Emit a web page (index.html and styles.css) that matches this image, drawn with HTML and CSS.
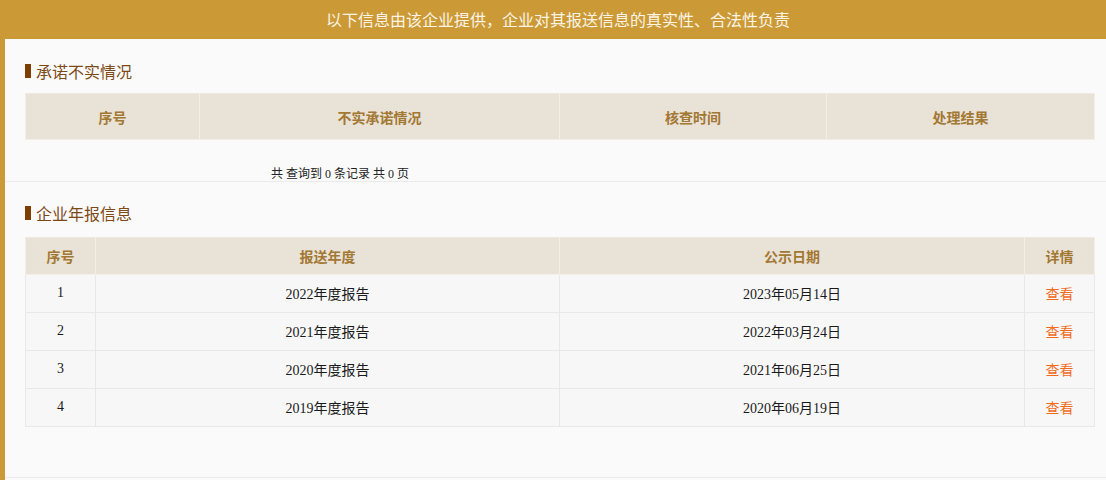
FILE: index.html
```html
<!DOCTYPE html>
<html lang="zh-CN">
<head>
<meta charset="utf-8">
<title>企业信息</title>
<link rel="stylesheet" href="styles.css">
</head>
<body>
<div class="notice">以下信息由该企业提供，企业对其报送信息的真实性、合法性负责</div>
<div class="frame">
  <section class="block block-first">
    <h2 class="sec-title"><span class="mark"></span>承诺不实情况</h2>
    <table class="grid grid-promise">
      <colgroup><col class="c1"><col class="c2"><col class="c3"><col class="c4"></colgroup>
      <thead>
        <tr><th>序号</th><th>不实承诺情况</th><th>核查时间</th><th>处理结果</th></tr>
      </thead>
    </table>
    <div class="pager">共 查询到 0 条记录 共 0 页</div>
  </section>
  <section class="block block-second">
    <h2 class="sec-title"><span class="mark"></span>企业年报信息</h2>
    <table class="grid grid-report">
      <colgroup><col class="r1"><col class="r2"><col class="r3"><col class="r4"></colgroup>
      <thead>
        <tr><th>序号</th><th>报送年度</th><th>公示日期</th><th>详情</th></tr>
      </thead>
      <tbody>
        <tr><td>1</td><td>2022年度报告</td><td>2023年05月14日</td><td><a class="view" href="#">查看</a></td></tr>
        <tr><td>2</td><td>2021年度报告</td><td>2022年03月24日</td><td><a class="view" href="#">查看</a></td></tr>
        <tr><td>3</td><td>2020年度报告</td><td>2021年06月25日</td><td><a class="view" href="#">查看</a></td></tr>
        <tr><td>4</td><td>2019年度报告</td><td>2020年06月19日</td><td><a class="view" href="#">查看</a></td></tr>
      </tbody>
    </table>
  </section>
</div>
</body>
</html>
```
FILE: styles.css
```css
* { box-sizing: border-box; }
html, body { margin: 0; padding: 0; }
body {
  width: 1106px;
  height: 480px;
  overflow: hidden;
  background: #fafafa;
  font-family: "Liberation Serif", "Noto Sans CJK SC", serif;
  color: #222;
}
.notice {
  height: 39px;
  background: #cb9a36;
  color: #fbf4e6;
  font-family: "Noto Sans CJK SC", sans-serif;
  font-size: 16px;
  line-height: 38px;
  text-align: center;
  padding-left: 10px;
}
.frame {
  border-left: 5px solid #cb9a36;
  height: 441px;
  background: #fafafa;
}
.block {
  border-bottom: 1px solid #ebebeb;
  padding: 0 12px 0 20px;
}
.block-first { height: 143px; padding-top: 21px; }
.block-second { height: 296px; padding-top: 20px; }
.sec-title {
  margin: 0;
  height: 22px;
  display: flex;
  align-items: center;
  font-family: "Noto Sans CJK SC", sans-serif;
  font-weight: normal;
  font-size: 16px;
  color: #7d4a17;
  line-height: 22px;
}
.mark {
  width: 6px;
  height: 14px;
  background: #7e3e02;
  margin-right: 5px;
}
.grid {
  width: 1069px;
  border-collapse: collapse;
  table-layout: fixed;
  margin-top: 11px;
  font-size: 14px;
}
.grid-report { margin-top: 13px; }
.grid th {
  background: #e9e2d7;
  color: #a27833;
  font-family: "Noto Sans CJK SC", sans-serif;
  font-weight: bold;
  border: 1px solid #f3efe8;
  border-top-color: #eeeae2;
  text-align: center;
  padding: 0;
}
.grid-promise th { height: 46px; }
.grid-report th { height: 37px; }
.c1 { width: 174px; }
.c2 { width: 360px; }
.c3 { width: 267px; }
.c4 { width: 268px; }
.r1 { width: 70px; }
.r2 { width: 464px; }
.r3 { width: 465px; }
.r4 { width: 70px; }
.grid td {
  height: 38px;
  background: #f7f7f7;
  border: 1px solid #e8e8e8;
  text-align: center;
  padding: 0 0 1px;
  color: #1a1a1a;
}
.view {
  color: #f26b1d;
  text-decoration: none;
  font-family: "Noto Sans CJK SC", sans-serif;
}
.pager {
  margin-top: 27px;
  padding-left: 246px;
  font-size: 12px;
  line-height: 14px;
  color: #222;
}
```
